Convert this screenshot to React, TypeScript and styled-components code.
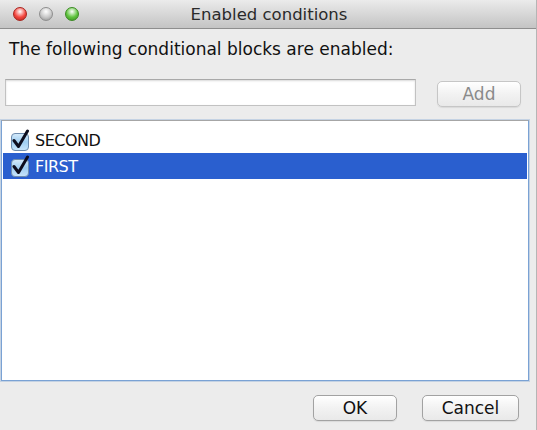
import React, { useState } from "react";
import styled, { createGlobalStyle } from "styled-components";

const GlobalStyle = createGlobalStyle`
  html, body {
    margin: 0;
    padding: 0;
    background: #ececec;
  }
  * {
    box-sizing: border-box;
  }
`;

const Window = styled.div`
  width: 537px;
  height: 430px;
  display: flex;
  flex-direction: column;
  background: #ececec;
  border-right: 1px solid #b5b5b5;
  font-family: "DejaVu Sans", "Liberation Sans", sans-serif;
  color: #111;
  overflow: hidden;
`;

const TitleBar = styled.div`
  position: relative;
  height: 29px;
  flex: none;
  display: flex;
  align-items: center;
  justify-content: center;
  background: linear-gradient(#ebebeb, #d3d3d3 60%, #c4c4c4);
  border-bottom: 1px solid #8e8e8e;
`;

const Title = styled.div`
  font-size: 16.5px;
  color: #2a2a2a;
  padding-left: 2px;
`;

const Lights = styled.div`
  position: absolute;
  left: 13px;
  top: 7px;
  display: flex;
  gap: 12px;
`;

const Light = styled.div<{ $tone: string; $edge: string }>`
  width: 14px;
  height: 14px;
  border-radius: 50%;
  border: 1px solid ${(p) => p.$edge};
  background: radial-gradient(circle at 50% 30%, #fff 0, ${(p) => p.$tone} 55%, ${(p) => p.$edge} 100%);
`;

const Body = styled.div`
  flex: 1;
  display: flex;
  flex-direction: column;
  padding: 0 8px 0 1px;
`;

const Label = styled.div`
  font-size: 17px;
  padding: 10px 0 0 8px;
  height: 50px;
`;

const InputRow = styled.div`
  display: flex;
  align-items: flex-start;
  padding-left: 4px;
  height: 41px;
`;

const TextField = styled.input`
  width: 411px;
  height: 27px;
  border: 1px solid #c2c2c2;
  border-top-color: #a9a9a9;
  box-shadow: inset 0 1px 2px rgba(0, 0, 0, 0.15);
  background: #fff;
  outline: none;
  font-family: inherit;
  font-size: 15px;
`;

const PushButton = styled.button<{ $width: number; $disabled?: boolean }>`
  width: ${(p) => p.$width}px;
  height: 26px;
  border-radius: 5px;
  border: 1px solid ${(p) => (p.$disabled ? "#c6c6c6" : "#a2a2a2")};
  background: linear-gradient(#ffffff, #f2f2f2 50%, #e9e9e9);
  box-shadow: 0 1px 1px rgba(0, 0, 0, 0.08);
  font-family: inherit;
  font-size: 17px;
  line-height: 24px;
  color: ${(p) => (p.$disabled ? "#8a8a8a" : "#111")};
  padding: 0;
`;

const AddButton = styled(PushButton)`
  margin: 2px 0 0 21px;
`;

const List = styled.div`
  width: 528px;
  height: 261px;
  background: #fff;
  border: 1px solid #7aa2d4;
  border-top-color: #a6a6a6;
  box-shadow: 0 0 0 1px rgba(122, 162, 212, 0.35);
  padding: 6px 1px 0 1px;
`;

const Row = styled.div<{ $selected?: boolean }>`
  height: 26px;
  display: flex;
  align-items: center;
  gap: 4px;
  padding-left: 6px;
  font-size: 16px;
  letter-spacing: -0.5px;
  background: ${(p) => (p.$selected ? "#2a5fcf" : "transparent")};
  color: ${(p) => (p.$selected ? "#fff" : "#111")};
  cursor: default;
`;

const Footer = styled.div`
  display: flex;
  justify-content: flex-end;
  gap: 25px;
  padding: 14px 9px 0 0;
`;

function CheckBox() {
  return (
    <svg width="22" height="22" viewBox="0 0 22 22">
      <defs>
        <linearGradient id="cbg" x1="0" y1="0" x2="0" y2="1">
          <stop offset="0" stopColor="#d6ebfb" />
          <stop offset="0.5" stopColor="#9fcdf1" />
          <stop offset="1" stopColor="#c9e5fb" />
        </linearGradient>
      </defs>
      <rect x="2.5" y="4.5" width="17" height="17" rx="3.5" fill="url(#cbg)" stroke="#6e8cae" />
      <path d="M5 11.5 L9.5 17.5 L18.5 2" fill="none" stroke="#0d0d1e" strokeWidth="3" strokeLinecap="round" strokeLinejoin="round" />
    </svg>
  );
}

export default function App() {
  const [selected, setSelected] = useState(1);
  const items = ["SECOND", "FIRST"];

  return (
    <Window>
      <GlobalStyle />
      <TitleBar>
        <Lights>
          <Light $tone="#f4453d" $edge="#a8231c" />
          <Light $tone="#c8c8c8" $edge="#8f8f8f" />
          <Light $tone="#5fc43d" $edge="#3a8a22" />
        </Lights>
        <Title>Enabled conditions</Title>
      </TitleBar>
      <Body>
        <Label>The following conditional blocks are enabled:</Label>
        <InputRow>
          <TextField />
          <AddButton $width={84} $disabled>
            Add
          </AddButton>
        </InputRow>
        <List>
          {items.map((name, i) => (
            <Row key={name} $selected={i === selected} onClick={() => setSelected(i)}>
              <CheckBox />
              {name}
            </Row>
          ))}
        </List>
        <Footer>
          <PushButton $width={84}>OK</PushButton>
          <PushButton $width={97}>Cancel</PushButton>
        </Footer>
      </Body>
    </Window>
  );
}
